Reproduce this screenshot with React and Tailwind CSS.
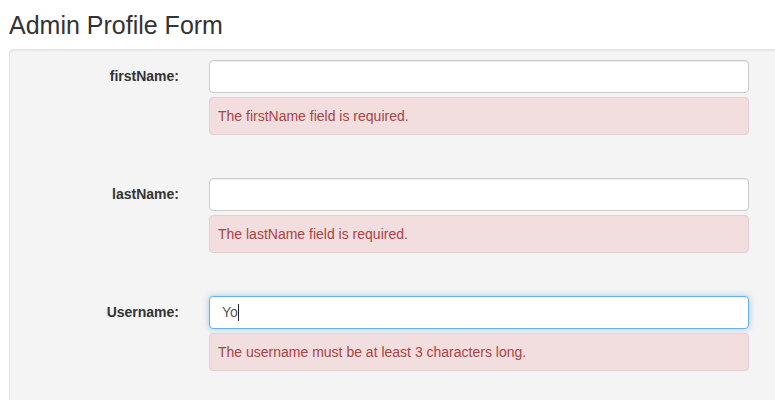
const fields = [
  { label: 'firstName:', value: '', error: 'The firstName field is required.' },
  { label: 'lastName:', value: '', error: 'The lastName field is required.' },
  { label: 'Username:', value: 'Yo', focused: true, error: 'The username must be at least 3 characters long.' },
];

const FieldRow = ({ label, value, focused, error }) => (
  <div className="flex mb-[43px]">
    <div className="w-[169px] h-[33px] flex items-center justify-end text-[14px] font-bold text-[#333]">
      {label}
    </div>
    <div className="ml-[30px] w-[540px]">
      {focused ? (
        <div className="h-[33px] flex items-center bg-white rounded-[4px] border border-[#66afe9] shadow-[0_0_6px_rgba(102,175,233,0.6)] pl-[12px] text-[14px] text-[#555]">
          <span>{value}</span>
          <span className="w-px h-[17px] bg-[#222]" />
        </div>
      ) : (
        <input
          type="text"
          defaultValue={value}
          className="block w-full h-[33px] bg-white rounded-[4px] border border-[#ccc] shadow-[inset_0_1px_1px_rgba(0,0,0,0.075)] px-3 text-[14px] text-[#555] outline-none"
        />
      )}
      <div className="mt-[4px] h-[38px] flex items-center bg-[#f2dede] border border-[#ebccd1] rounded-[4px] pl-[8px] text-[14px] text-[#a94442]">
        {error}
      </div>
    </div>
  </div>
);

export default function App() {
  return (
    <div className="w-[775px] h-[400px] overflow-hidden bg-white font-['Liberation_Sans',Arial,sans-serif]">
      <h1 className="h-[49px] pl-[9px] pt-[11px] text-[25px] leading-[28px] text-[#333]">
        Admin Profile Form
      </h1>
      <div className="ml-[9px] w-[800px] bg-[#f4f4f4] border border-[#e3e3e3] rounded-[4px] pt-[10px] shadow-[inset_0_1px_1px_rgba(0,0,0,0.05)]">
        {fields.map((f) => (
          <FieldRow key={f.label} {...f} />
        ))}
      </div>
    </div>
  );
}
